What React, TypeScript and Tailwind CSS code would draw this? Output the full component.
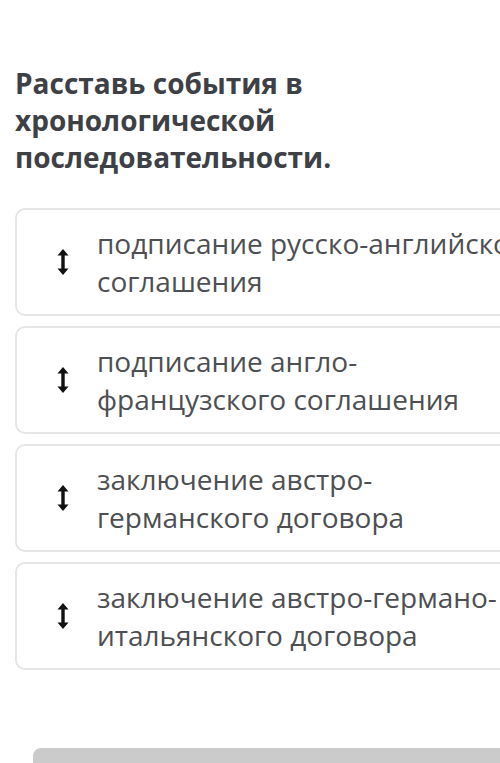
const ITEMS: string[][] = [
  ['подписание русско-английского', 'соглашения'],
  ['подписание англо-', 'французского соглашения'],
  ['заключение австро-', 'германского договора'],
  ['заключение австро-германо-', 'итальянского договора'],
];

function DragIcon() {
  return (
    <svg width="12" height="28" viewBox="0 0 12 28" className="shrink-0">
      <path d="M6 1 L11.5 7.5 L7.7 7.5 L7.7 20.5 L11.5 20.5 L6 27 L0.5 20.5 L4.3 20.5 L4.3 7.5 L0.5 7.5 Z" fill="#111" />
    </svg>
  );
}

function OrderCard({ lines }: { lines: string[] }) {
  return (
    <div className="flex items-center h-[108px] w-[560px] shrink-0 rounded-[10px] border-2 border-[#e6e6e6] bg-white">
      <div className="w-[80px] flex justify-center pl-[12px]">
        <DragIcon />
      </div>
      <div className="text-[28px] leading-[38px] text-[#4d4f52] whitespace-nowrap">
        {lines.map((l, i) => (
          <div key={i}>{l}</div>
        ))}
      </div>
    </div>
  );
}

export default function App() {
  return (
    <div
      className="w-[500px] h-[763px] overflow-hidden bg-white flex flex-col"
      style={{ fontFamily: '"Open Sans", "Noto Sans", sans-serif' }}
    >
      <h1 className="pt-[65px] pl-[15px] text-[28px] leading-[37px] font-bold text-[#3d4045]">
        Расставь события в<br />
        хронологической<br />
        последовательности.
      </h1>
      <div className="mt-[32px] pl-[15px] flex flex-col gap-[10px]">
        {ITEMS.map((lines, i) => (
          <OrderCard key={i} lines={lines} />
        ))}
      </div>
      <div className="mt-[78px] ml-[33px] h-[40px] w-[500px] shrink-0 rounded-tl-[8px] bg-[#cbcbcb]" />
    </div>
  );
}
